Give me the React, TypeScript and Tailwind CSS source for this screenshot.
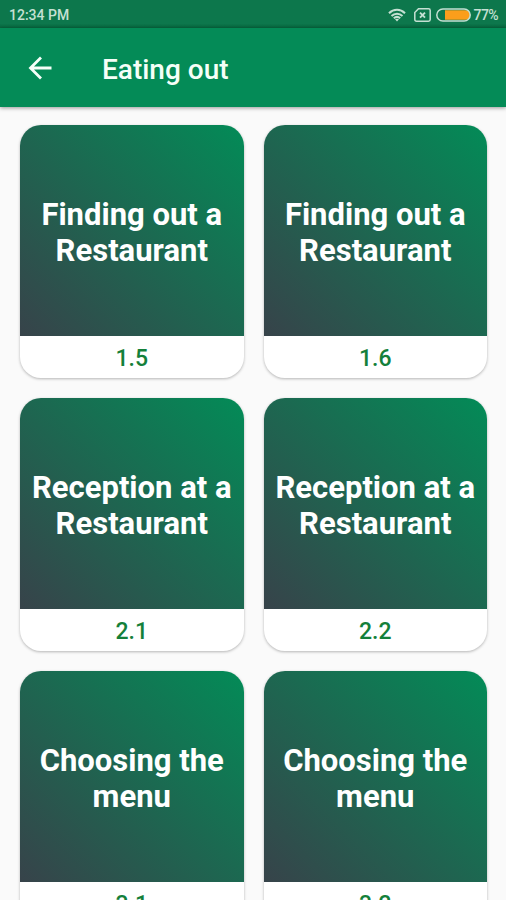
import React from 'react';

interface Lesson {
  title: string[];
  code: string;
}

const lessons: Lesson[] = [
  { title: ['Finding out a', 'Restaurant'], code: '1.5' },
  { title: ['Finding out a', 'Restaurant'], code: '1.6' },
  { title: ['Reception at a', 'Restaurant'], code: '2.1' },
  { title: ['Reception at a', 'Restaurant'], code: '2.2' },
  { title: ['Choosing the', 'menu'], code: '3.1' },
  { title: ['Choosing the', 'menu'], code: '3.2' },
];

const WifiIcon = () => (
  <svg className="w-[18px] h-[14px]" viewBox="0 0 18 14" fill="none" stroke="currentColor" strokeWidth="2">
    <path d="M1 5.2C5.6 0.6 12.4 0.6 17 5.2" />
    <path d="M3.5 7.9C6.7 4.9 11.3 4.9 14.5 7.9" />
    <path d="M5.8 10.3C7.7 8.6 10.3 8.6 12.2 10.3" />
    <path d="M7 11.3C8.2 10.4 9.8 10.4 11 11.3L9 13.6Z" fill="currentColor" stroke="none" />
  </svg>
);

const NoSimIcon = () => (
  <svg className="w-[17px] h-[14px]" viewBox="0 0 17 14" fill="none" stroke="currentColor" strokeWidth="1.5">
    <path d="M4.5 0.8H14.5Q16.2 0.8 16.2 2.5V11.5Q16.2 13.2 14.5 13.2H2.5Q0.8 13.2 0.8 11.5V4.5Z" />
    <path d="M6 4.6L11 9.6M11 4.6L6 9.6" strokeWidth="1.9" />
  </svg>
);

const BatteryIcon = () => (
  <svg className="w-[35px] h-[14px]" viewBox="0 0 35 14">
    <path d="M9 2.2H29.5A4.8 4.8 0 0 1 29.5 11.8H9Z" fill="#fb9e1b" />
    <rect x="0.8" y="0.9" width="33.4" height="12.2" rx="6.1" fill="none" stroke="currentColor" strokeWidth="1.5" />
  </svg>
);

const StatusBar = () => (
  <div className="h-7 shrink-0 flex items-center justify-between pl-[9px] pr-2 pt-[2px] bg-gradient-to-b from-[#0d774c] from-85% to-[#07653d] text-[#c5e0d3]">
    <span className="text-[14px] font-medium leading-none">12:34 PM</span>
    <div className="flex items-center">
      <WifiIcon />
      <span className="ml-2 flex"><NoSimIcon /></span>
      <span className="ml-[5px] flex"><BatteryIcon /></span>
      <span className="ml-[3px] text-[14px] font-medium leading-none tracking-[-0.6px]">77%</span>
    </div>
  </div>
);

const AppBar = () => (
  <header className="relative h-[79px] shrink-0 flex items-center pl-7 bg-[#048b57] text-[#f5fff8] shadow-[0_1px_4px_rgba(0,0,0,0.4)]">
    <svg className="w-6 h-6 mt-px" viewBox="0 0 24 24" fill="none" stroke="currentColor" strokeWidth="2.8">
      <path d="M23.5 12H2.5M13 1.5L2.5 12L13 22.5" />
    </svg>
    <h1 className="ml-[50px] mt-1 text-[28px] leading-8 font-medium">Eating out</h1>
  </header>
);

const LessonCard: React.FC<{ lesson: Lesson }> = ({ lesson }) => (
  <div className="h-[253px] rounded-[21px] overflow-hidden bg-white shadow-[0_1px_3px_rgba(0,0,0,0.28)]">
    <div className="h-[211px] pt-[5px] flex flex-col items-center justify-center bg-[linear-gradient(45deg,#37434a_0%,#038b57_100%)] text-white text-[31px] leading-9 font-bold whitespace-nowrap">
      {lesson.title.map((line) => (
        <span key={line}>{line}</span>
      ))}
    </div>
    <div className="h-[42px] pt-[2px] flex items-center justify-center text-[#14803a] text-[23px] leading-none font-medium">
      {lesson.code}
    </div>
  </div>
);

const App = () => {
  return (
    <div className="w-full h-screen overflow-hidden flex flex-col bg-[#fafafa] font-['Roboto',sans-serif]">
      <StatusBar />
      <AppBar />
      <main className="grow min-h-0 overflow-hidden">
        <div className="grid grid-cols-2 gap-x-5 gap-y-5 pl-5 pr-[19px] pt-[18px]">
          {lessons.map((lesson) => (
            <LessonCard key={lesson.code} lesson={lesson} />
          ))}
        </div>
      </main>
    </div>
  );
};

export default App;
